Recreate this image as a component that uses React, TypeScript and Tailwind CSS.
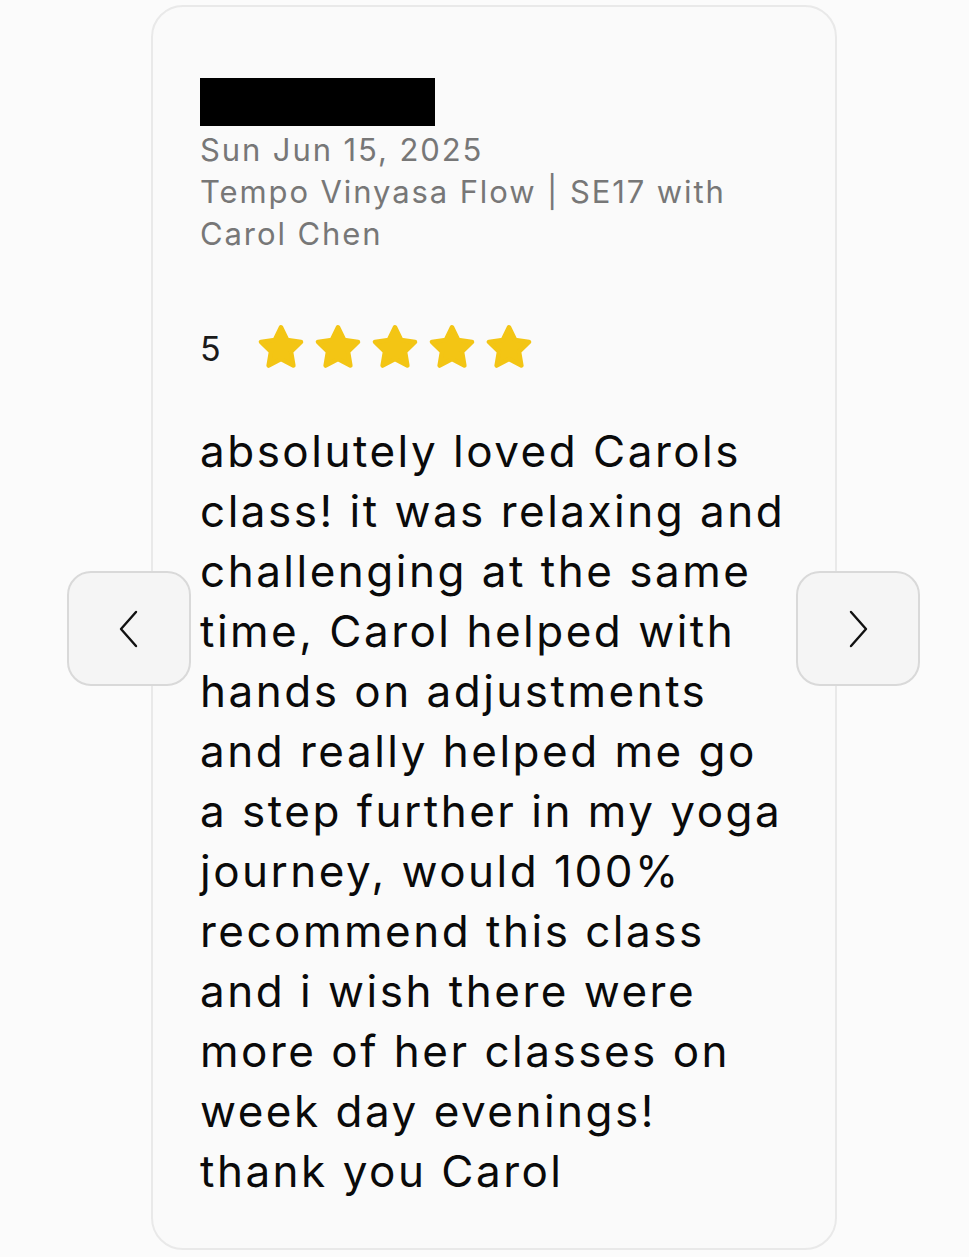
import React from "react";

function StarIcon() {
  return (
    <svg width="54" height="54" viewBox="0 0 24 24" aria-hidden="true">
      <path
        d="M12 2.8l2.75 5.6 6.15.9-4.45 4.35 1.05 6.15L12 16.9l-5.5 2.9 1.05-6.15L3.1 9.3l6.15-.9z"
        fill="#f3c514"
        stroke="#f3c514"
        strokeWidth="2"
        strokeLinejoin="round"
      />
    </svg>
  );
}

export default function App() {
  return (
    <div className="min-h-[1257px] w-[969px] bg-[#fbfbfb] flex" style={{ fontFamily: "Inter, 'Noto Sans', sans-serif" }}>
      <div className="relative ml-[151px] mt-[5px] mb-[7px] w-[686px] h-[1245px]">
        <div className="h-full rounded-[32px] border-2 border-[#e9e9e9] bg-[#fafafa] pl-[47px] pr-[44px] pt-[71px]">
          <div className="w-[235px] h-[48px] bg-black" />
          <div className="mt-[3px] text-[31px] leading-[42px] text-[#777777] tracking-[1.9px]">
            <div>Sun Jun 15, 2025</div>
            <div>Tempo Vinyasa Flow | SE17 with Carol Chen</div>
          </div>
          <div className="mt-[66px] flex items-center h-[54px]">
            <span className="text-[34px] text-[#1a1a1a] w-[54px]">5</span>
            <div className="flex gap-[3px]">
              <StarIcon />
              <StarIcon />
              <StarIcon />
              <StarIcon />
              <StarIcon />
            </div>
          </div>
          <p className="mt-[46px] text-[44px] leading-[60px] text-[#0a0a0a] tracking-[2.5px]">
            absolutely loved Carols class! it was relaxing and challenging at the same time, Carol helped with hands on adjustments and really helped me go a step further in my yoga journey, would 100% recommend this class and i wish there were more of her classes on week day evenings! thank you Carol
          </p>
        </div>
        <button className="absolute left-[-84px] top-[566px] w-[124px] h-[115px] rounded-[24px] border-2 border-[#d9d9d9] bg-[#f5f5f5] flex items-center justify-center">
          <svg width="22" height="38" viewBox="0 0 22 38" fill="none" stroke="#111" strokeWidth="2.4" strokeLinecap="round" strokeLinejoin="round">
            <path d="M18 2L3 19l15 17" />
          </svg>
        </button>
        <button className="absolute right-[-83px] top-[566px] w-[124px] h-[115px] rounded-[24px] border-2 border-[#d9d9d9] bg-[#f5f5f5] flex items-center justify-center">
          <svg width="22" height="38" viewBox="0 0 22 38" fill="none" stroke="#111" strokeWidth="2.4" strokeLinecap="round" strokeLinejoin="round">
            <path d="M4 2l15 17L4 36" />
          </svg>
        </button>
      </div>
    </div>
  );
}
